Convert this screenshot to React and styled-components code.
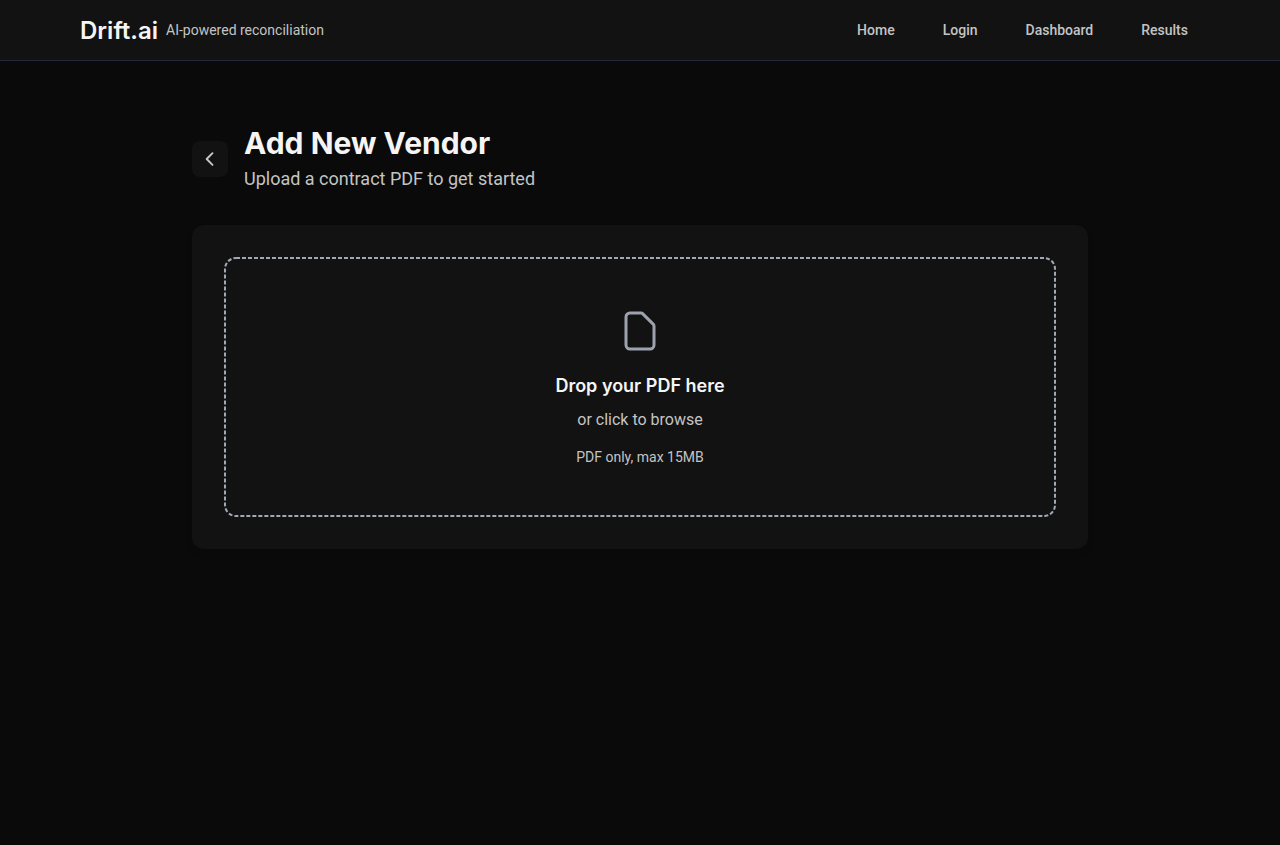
import React from "react";
import styled, { createGlobalStyle } from "styled-components";

const GlobalStyle = createGlobalStyle`
  *, *::before, *::after { box-sizing: border-box; }
  body {
    margin: 0;
    background: #0a0a0a;
    color: #f5f5f5;
    font-family: Roboto, "Liberation Sans", sans-serif;
    -webkit-font-smoothing: antialiased;
  }
  h1, h2, p { margin: 0; }
`;

const Page = styled.div`
  min-height: 100vh;
`;

const Header = styled.header`
  height: 61px;
  padding: 0 80px;
  display: flex;
  align-items: center;
  justify-content: space-between;
  background: #121212;
  border-bottom: 1px solid #1e293b;
`;

const Brand = styled.div`
  display: flex;
  align-items: center;
  gap: 8px;
`;

const Logo = styled.span`
  padding-top: 1px;
  font: 600 24px/32px Inter, sans-serif;
`;

const Tagline = styled.span`
  font-size: 14px;
  line-height: 20px;
  color: #c4c4c4;
`;

const Nav = styled.nav`
  display: flex;
  gap: 48px;
  padding-right: 12px;
`;

const NavLink = styled.a`
  font-size: 14px;
  font-weight: 500;
  line-height: 20px;
  color: #c4c4c4;
  text-decoration: none;
`;

const Main = styled.main`
  width: 896px;
  margin: 0 auto;
  padding-top: 64px;
`;

const TitleRow = styled.div`
  display: flex;
  align-items: center;
  gap: 16px;
  margin-bottom: 32px;
`;

const BackButton = styled.button`
  width: 36px;
  height: 36px;
  padding: 0;
  border: 0;
  border-radius: 8px;
  display: grid;
  place-items: center;
  background: #121212;
  color: #c8c8c8;
`;

const Title = styled.h1`
  font: 700 30px/36px Inter, sans-serif;
`;

const Subtitle = styled.p`
  margin-top: 4px;
  font-size: 18px;
  line-height: 28px;
  color: #c4c4c4;
`;

const Card = styled.section`
  padding: 32px;
  border-radius: 12px;
  background: #121212;
  box-shadow: 0 4px 6px rgba(0, 0, 0, 0.1);
`;

const DropZone = styled.div`
  position: relative;
  height: 260px;
  padding-top: 50px;
  display: flex;
  flex-direction: column;
  align-items: center;
`;

const DashedOutline = styled.svg`
  position: absolute;
  inset: 0;
  width: 100%;
  height: 100%;
  fill: none;
  stroke: #a1a7b3;
  stroke-width: 2;
  stroke-dasharray: 4 2;
`;

const DropTitle = styled.h2`
  margin-top: 17px;
  font: 600 18px/28px Inter, sans-serif;
`;

const DropText = styled.p`
  margin-top: 8px;
  font-size: 16px;
  line-height: 24px;
  color: #c4c4c4;
`;

const DropHint = styled.p`
  margin-top: 15px;
  font-size: 14px;
  line-height: 20px;
  color: #c4c4c4;
`;

const Icon = styled.svg`
  display: block;
  flex: none;
  width: ${(p) => p.$size}px;
  height: ${(p) => p.$size}px;
  fill: none;
  stroke: ${(p) => p.$color || "currentColor"};
  stroke-width: ${(p) => p.$stroke};
  stroke-linecap: round;
  stroke-linejoin: round;
`;

const links = ["Home", "Login", "Dashboard", "Results"];

export default function App() {
  return (
    <Page>
      <GlobalStyle />
      <Header>
        <Brand>
          <Logo>Drift.ai</Logo>
          <Tagline>AI-powered reconciliation</Tagline>
        </Brand>
        <Nav>
          {links.map((label) => (
            <NavLink key={label} href="#">{label}</NavLink>
          ))}
        </Nav>
      </Header>
      <Main>
        <TitleRow>
          <BackButton aria-label="Back">
            <Icon $size={20} $stroke={2.3} viewBox="0 0 24 24">
              <path d="M15 19l-7-7 7-7" />
            </Icon>
          </BackButton>
          <div>
            <Title>Add New Vendor</Title>
            <Subtitle>Upload a contract PDF to get started</Subtitle>
          </div>
        </TitleRow>
        <Card>
          <DropZone>
            <DashedOutline viewBox="0 0 832 260">
              <rect x="1" y="1" width="830" height="258" rx="11" />
            </DashedOutline>
            <Icon $size={48} $stroke={1.5} $color="#9ca3af" viewBox="0 0 24 24">
              <path d="M7 21h10a2 2 0 002-2V9.414a1 1 0 00-.293-.707l-5.414-5.414A1 1 0 0012.586 3H7a2 2 0 00-2 2v14a2 2 0 002 2z" />
            </Icon>
            <DropTitle>Drop your PDF here</DropTitle>
            <DropText>or click to browse</DropText>
            <DropHint>PDF only, max 15MB</DropHint>
          </DropZone>
        </Card>
      </Main>
    </Page>
  );
}
